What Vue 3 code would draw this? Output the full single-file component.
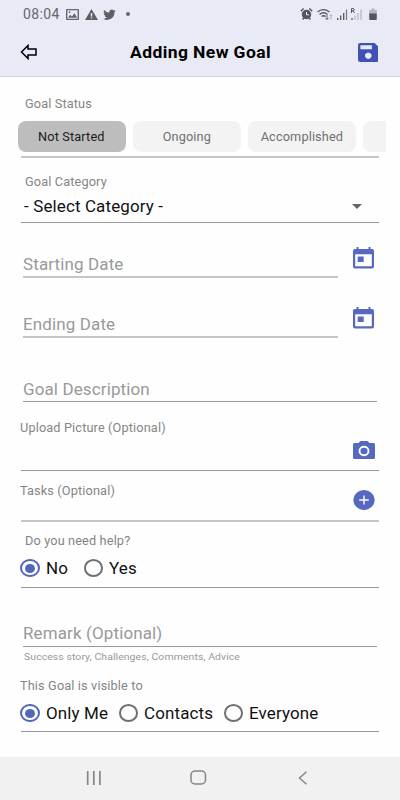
<script setup>
import { ref } from 'vue'

const statuses = ['Not Started', 'Ongoing', 'Accomplished', '']
const status = ref('Not Started')
const help = ref('No')
const visibility = ref('Only Me')
</script>

<template>
  <div class="screen">
    <header class="top">
      <div class="statusbar">
        <div class="left">
          <span class="clock">08:04</span>
          <svg class="s-img" width="13" height="11" viewBox="0 0 13 11">
            <path fill="#66666b" fill-rule="evenodd" d="M1 0h11q1 0 1 1v9q0 1-1 1H1q-1 0-1-1V1q0-1 1-1zM1.4 1.3v8.4h10.2V1.3z" />
            <path fill="#66666b" d="M2 8.8l2.1-3 1.8 1.7 2.6-3.3 2.6 4.6z" /><circle cx="3.6" cy="3.2" r=".9" fill="#66666b" />
          </svg>
          <svg class="s-warn" width="13" height="11" viewBox="0 0 13 11">
            <path fill="#5e5e63" fill-rule="evenodd" d="M6.5 0L13 11H0zM5.8 4v3.4h1.4V4zM5.8 8.2v1.4h1.4V8.2z" />
          </svg>
          <svg class="s-bird" width="13" height="11" viewBox="1 3 22 18.5" preserveAspectRatio="none">
            <path fill="#5e5e63" d="M22.5 6c-.8.3-1.6.6-2.5.7.9-.5 1.6-1.4 1.9-2.4-.8.5-1.8.9-2.7 1.1a4.3 4.3 0 0 0-7.4 3.9A12.200 12.200 0 0 1 2.900 4.800a4.300 4.300 0 0 0 1.300 5.800c-.7 0-1.400-.2-2-.5a4.300 4.300 0 0 0 3.500 4.200c-.6.2-1.300.2-1.900.1a4.300 4.300 0 0 0 4 3A8.700 8.700 0 0 1 1.500 19.200a12.200 12.200 0 0 0 18.800-10.900c.9-.6 1.600-1.400 2.200-2.300z" />
          </svg>
          <i class="dot"></i>
        </div>
        <div class="right">
          <svg width="80" height="14" viewBox="0 0 80 14">
            <g fill="none" stroke="#55555a">
              <circle cx="6.500" cy="7.500" r="4" fill="#55555a" stroke-width="1.500" />
              <path d="M.8 4.300L3.600 1.500M9.400 1.500l2.800 2.800M2.500 12.500l1.500-1.500M10.500 12.500L9 11" stroke-width="1.500" />
              <path d="M6.500 5v2.800H9" stroke="#e8eaf6" />
              <path d="M17.500 5q5.500-4.700 12 0M19.500 7.400q4-3.300 8 0M21.600 9.500q2-1.500 4 0" stroke-width="1.300" />
              <path d="M27 8v4.500M25.500 11l1.500 1.500 1.500-1.500" stroke-width=".9" />
              <path d="M31 12.500V7.500M29.700 9L31 7.700 32.300 9" stroke="#aaaab2" stroke-width=".9" />
              <path d="M37.700 13v-2M40.700 13V8.500M43.700 13V6" stroke-width="1.300" />
              <path d="M46.500 13V2.500" stroke="#77777e" stroke-width="1.200" />
              <path d="M52 13v-2" stroke-width="1.200" />
              <path d="M55 13V8.500M58 13V6M61 13V2.500" stroke="#b4b5c0" stroke-width="1.200" />
              <path d="M51.500 6V1.600h1.600q1.100 0 1.100 1.100t-1.100 1.100h-1.600M53 3.800L54.500 6" stroke-width="1" />
            </g>
            <path fill="#b4b5c0" d="M71.500 1.500h3V3h2.300v4h-7.600V3h2.300z" />
            <path fill="#55555a" d="M69.200 6.500h7.600V12q0 1-1 1h-5.600q-1 0-1-1z" />
          </svg>
        </div>
      </div>
      <div class="appbar">
        <svg class="back" width="18" height="16" viewBox="0 0 18 16">
          <path d="M1.500 8L8 1.500V5h8v6H8v3.500z" fill="none" stroke="#000" stroke-width="1.500" />
        </svg>
        <h1><span class="t">Adding New Goal</span></h1>
        <svg class="save" width="20.500" height="19" viewBox="0 0 20.500 19" preserveAspectRatio="none">
          <path fill="#3f51b5" fill-rule="evenodd" d="M2.300 0H16.500L20.500 3.800V17q0 2-2.300 2H2.300Q0 19 0 17V2Q0 0 2.300 0zM2.400 2.200v4h11.500v-4zM10.300 9.500a3.300 3.200 0 1 0 .01 0z" />
        </svg>
      </div>
    </header>

    <main>
      <section class="block soft status-block">
        <span class="label inset"><span class="t">Goal Status</span></span>
        <div class="chips">
          <button v-for="s in statuses" :key="s" class="chip" :class="{ on: s === status }" @click="status = s"><span class="tc">{{ s }}</span></button>
        </div>
      </section>

      <section class="block category">
        <span class="label inset"><span class="t">Goal Category</span></span>
        <div class="select"><span class="t">- Select Category -</span><i class="caret"></i></div>
      </section>

      <div v-for="d in ['Starting Date', 'Ending Date']" :key="d" class="date-row">
        <div class="input soft"><span class="t">{{ d }}</span></div>
        <svg class="cal" width="21" height="22" viewBox="0 0 21 22">
          <path fill="#5768bf" fill-rule="evenodd" d="M3.500 0h2v2h10V0h2v2H19q2 0 2 2v15.500q0 2-2 2H2q-2 0-2-2V4q0-2 2-2h1.500zM2.200 7.200v12h16.600v-12zM4.700 9.500h6v5.400h-6z" />
        </svg>
      </div>

      <div class="input description"><span class="t">Goal Description</span></div>

      <section class="block upload">
        <span class="label"><span class="t">Upload Picture (Optional)</span></span>
        <svg class="action" width="22" height="18" viewBox="0 0 22 18">
          <path fill="#5768bf" d="M7.500 0h7l2 2H20.500q1.500 0 1.500 1.500v13q0 1.500-1.500 1.500H1.500q-1.500 0-1.500-1.500v-13q0-1.500 1.500-1.500H5.500z" />
          <ellipse cx="11" cy="10" rx="4.500" ry="4.200" fill="none" stroke="#fff" stroke-width="1.900" />
        </svg>
      </section>

      <section class="block soft tasks">
        <span class="label"><span class="t">Tasks (Optional)</span></span>
        <svg class="action" width="22" height="20" viewBox="0 0 22 20">
          <ellipse cx="11" cy="10" rx="10.700" ry="9.900" fill="#5768bf" />
          <path d="M11 5.500v9M6.200 10h9.600" stroke="#fff" stroke-width="1.400" />
        </svg>
      </section>

      <section class="block help">
        <span class="label inset"><span class="t">Do you need help?</span></span>
        <div class="radios">
          <label v-for="o in ['No', 'Yes']" :key="o" :class="['radio', o.toLowerCase()]" @click="help = o">
            <i class="ring" :class="{ on: o === help }"></i><span class="t">{{ o }}</span>
          </label>
        </div>
      </section>

      <div class="input remark"><span class="t">Remark (Optional)</span></div>
      <p class="hint"><span class="t">Success story, Challenges, Comments, Advice</span></p>

      <section class="block visible">
        <span class="label"><span class="t">This Goal is visible to</span></span>
        <div class="radios">
          <label v-for="(o, i) in ['Only Me', 'Contacts', 'Everyone']" :key="o" :class="['radio', 'v' + i]" @click="visibility = o">
            <i class="ring" :class="{ on: o === visibility }"></i><span class="t">{{ o }}</span>
          </label>
        </div>
      </section>
    </main>

    <nav class="sysnav">
      <svg width="16" height="14" viewBox="0 0 16 14"><path d="M1.700 0v14M7.800 0v14M13.900 0v14" stroke="#858585" stroke-width="1.700" /></svg>
      <svg width="17" height="15" viewBox="0 0 17 15"><rect x="1" y="1" width="14.500" height="13" rx="4" fill="none" stroke="#858585" stroke-width="1.500" /></svg>
      <svg width="10" height="14" viewBox="0 0 10 14"><path d="M8.500 .8L1.500 7l7 6.200" fill="none" stroke="#858585" stroke-width="1.500" /></svg>
    </nav>
  </div>
</template>

<style>
body { margin: 0; background: #fff; }
</style>

<style scoped>
.screen { width: 400px; height: 800px; overflow: hidden; display: flex; flex-direction: column; background: #fefefe; font-family: Roboto, "Liberation Sans", sans-serif; box-sizing: border-box; }
.screen * { box-sizing: border-box; }
svg { display: block; flex: none; }
.t, .tc { display: inline-block; white-space: nowrap; transform: scaleX(1.06); transform-origin: left center; letter-spacing: .13px; }
.tc { transform-origin: center; }

.top { height: 77px; background: #e8eaf6; border-bottom: 1px solid #cdd1ee; flex: none; }
.statusbar { height: 28px; display: flex; justify-content: space-between; padding: 0 20px 0 23px; }
.left { display: flex; align-items: center; }
.clock { width: 43px; font-size: 14px; line-height: 28px; letter-spacing: .35px; color: #66666b; }
.s-warn, .s-bird { margin-left: 5.500px; }
.dot { width: 4px; height: 4px; border-radius: 50%; background: #66666b; margin-left: 10px; }
.right { padding-top: 7px; }
.appbar { height: 48px; display: flex; align-items: center; padding: 0 22px 0 20px; }
.appbar h1 { margin: 1px 0 0 91.500px; width: 228px; font-size: 16.500px; line-height: 20px; font-weight: 700; }
.appbar h1 .t { letter-spacing: .38px; }

main { height: 680px; display: flex; flex-direction: column; flex: none; }
.block { margin: 0 21px; border-bottom: 1px solid #999; flex: none; }
.block.soft, .input.soft { border-bottom: 2px solid #c6c6c6; }
.label { display: block; height: 16px; font-size: 12px; line-height: 16px; color: #858585; margin-left: -1.500px; }
.label.inset { margin-left: 3.500px; }
.status-block { height: 81px; padding-top: 19px; }
.status-block .label { position: relative; }
.chips { display: flex; gap: 7.500px; margin: 9px -7px 0 -3px; overflow: hidden; }
.chip { flex: none; width: 107.500px; height: 31px; padding: 1px 0 0; border: 0; border-radius: 8px; background: #f3f3f3; color: #6f6f6f; font: 12px/30px Roboto, sans-serif; }
.chip.on { background: #bdbdbd; color: #1b1b1b; }
.category { height: 65px; padding-top: 15.500px; }
.select { display: flex; align-items: center; justify-content: space-between; height: 20px; margin: 7px 17px 0 3px; font-size: 16px; color: #111; }
.caret { border: 5px solid transparent; border-top-color: #666; border-bottom: 0; }

.input { height: 30px; border-bottom: 1px solid #999; font-size: 16px; line-height: 20px; padding-top: 7px; color: #999; flex: none; }
.date-row { height: 60px; display: flex; justify-content: space-between; align-items: flex-start; padding: 0 26px 0 23px; flex: none; }
.date-row .input { width: 315px; height: 31px; margin-top: 24px; padding-top: 8px; }
.cal { margin-top: 24px; }
.description { margin: 29px 23px 0; padding-top: 8px; }
.upload { height: 69px; padding-top: 17.500px; }
.tasks { height: 51px; padding-top: 12px; }
.upload, .tasks { display: flex; justify-content: space-between; }
.action { margin-right: 4.500px; }
.upload .action { margin-top: 21px; }
.tasks .action { margin-top: 7px; }
.help { height: 66px; padding-top: 11px; }
.radios { display: flex; margin: 9px 0 0 -.7px; }
.radio { display: flex; align-items: center; height: 20px; font-size: 16px; color: #111; flex: none; }
.ring { width: 19.400px; height: 18px; margin-right: 6px; border: 2px solid #707070; border-radius: 50%; display: grid; place-items: center; }
.ring.on { border-color: #5365bd; }
.ring.on::after { content: ""; width: 10px; height: 9px; border-radius: 50%; background: #5365bd; }
.radio.no { width: 63.500px; }
.radio.v0 { width: 98.500px; }
.radio.v1 { width: 105px; }
.remark { margin: 29px 23px 0; }
.hint { margin: 4px 24px 0; height: 12px; font-size: 9.900px; line-height: 12px; color: #999; flex: none; }
.hint .t { letter-spacing: .07px; }
.visible { height: 69px; padding-top: 15px; }

.sysnav { height: 43px; background: #f1f1f1; display: flex; align-items: center; padding: 0 0 2px 86px; flex: none; }
.sysnav svg:nth-child(2) { margin-left: 87.500px; }
.sysnav svg:nth-child(3) { margin-left: 91px; }
</style>
